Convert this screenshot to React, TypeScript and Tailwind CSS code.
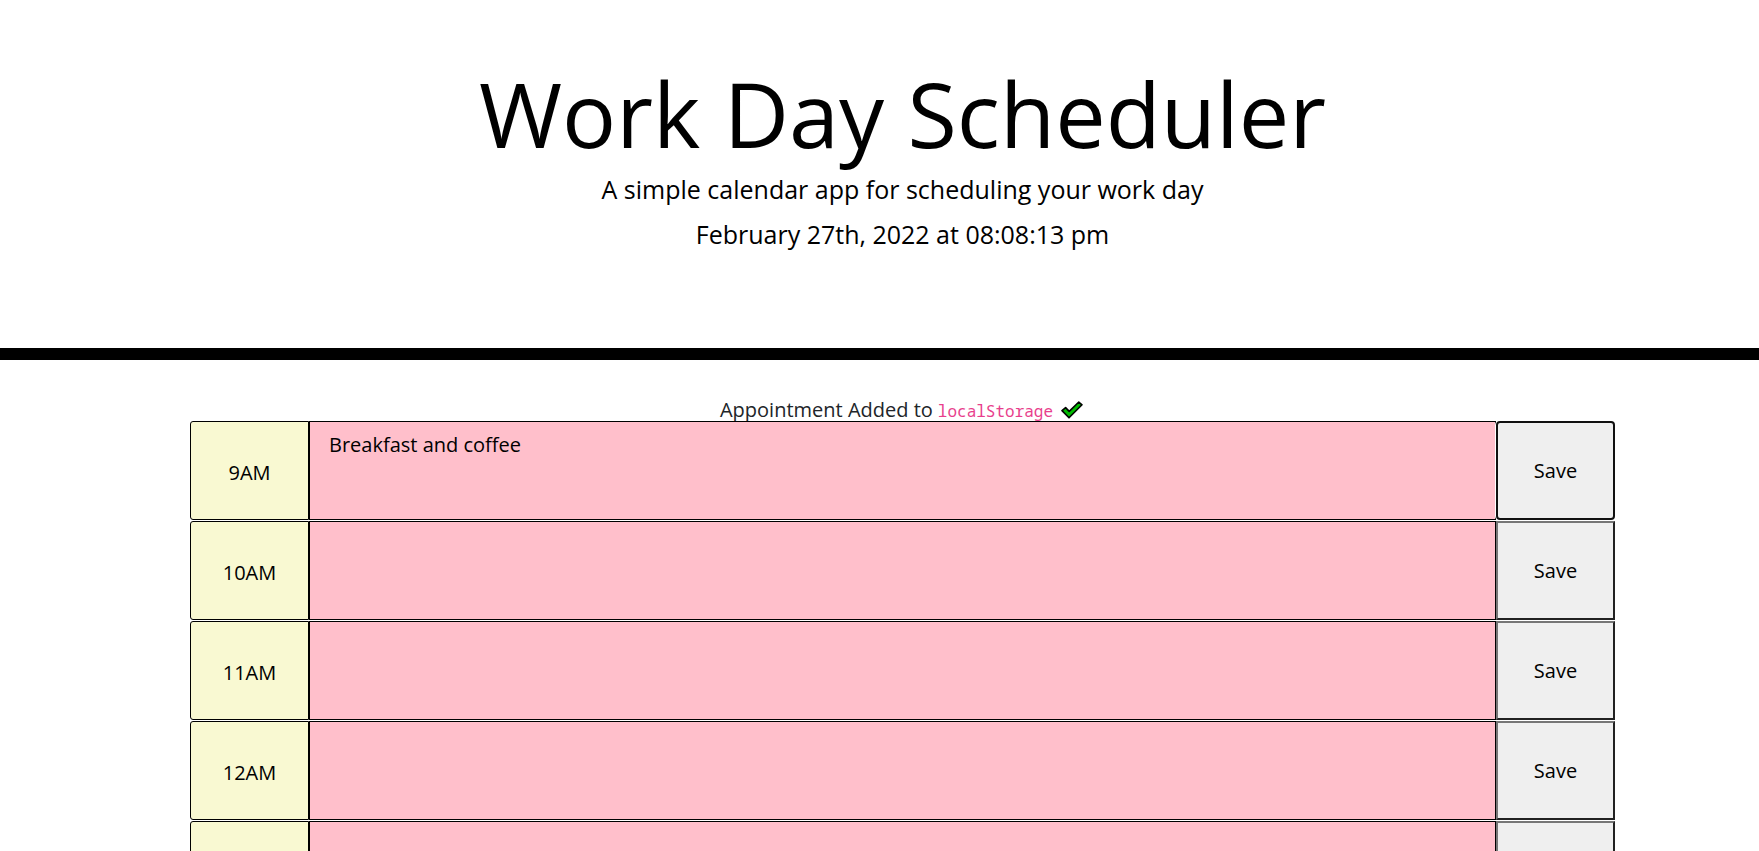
import { useState } from "react";

const hours = ["9AM", "10AM", "11AM", "12AM", "1PM", "2PM", "3PM", "4PM", "5PM"];

function CheckMark() {
  return (
    <svg width="22" height="18" viewBox="0 0 22 18" aria-hidden="true">
      <path
        d="M1 9.6 L4.6 6.6 L8.2 10.4 L17.8 1 L21 3.8 L8 16.8 Z"
        fill="#00bb00"
        stroke="#000"
        strokeWidth="1.6"
        strokeLinejoin="round"
      />
    </svg>
  );
}

function HourRow({ hour, initial, active }: { hour: string; initial: string; active: boolean }) {
  const [text, setText] = useState(initial);
  const id = `task-${hour}`;
  return (
    <div className="flex h-[99px]">
      <label
        htmlFor={id}
        className="flex w-[119px] shrink-0 items-center justify-center rounded-l-[3px] border border-black bg-[#f9f9d2] pt-1"
      >
        {hour}
      </label>
      <textarea
        id={id}
        value={text}
        onChange={(e) => setText(e.target.value)}
        className="min-w-0 grow resize-none border border-black bg-[#ffbfcb] px-[19px] py-2 outline-none"
      />
      <button
        type="button"
        className={
          active
            ? "w-[119px] shrink-0 rounded-[4px] border-2 border-[#101010] bg-[#efefef] ring-1 ring-white"
            : "w-[119px] shrink-0 border-2 border-t-[#767676] border-r-[#212121] border-b-[#212121] border-l-[#767676] bg-[#efefef]"
        }
      >
        Save
      </button>
    </div>
  );
}

export default function App() {
  return (
    <div className="min-h-screen bg-white font-['Open_Sans',sans-serif] text-[20px] leading-[30px] text-black">
      <header className="border-b-12 border-black pt-[59px] pb-[94px] pl-[46px] text-center">
        <h1 className="text-[90px] leading-[108px]">Work Day Scheduler</h1>
        <p className="mt-[2px] text-[25px] leading-[40px]">A simple calendar app for scheduling your work day</p>
        <p className="mt-[5px] text-[25px] leading-[40px]">February 27th, 2022 at 08:08:13 pm</p>
      </header>
      <main className="pt-[38px] pl-[46px]">
        <p className="flex h-[23px] items-baseline justify-center pr-[2px] leading-[24px] text-[#212529]">
          Appointment Added to
          <code className="ml-[5px] font-['Noto_Sans_Mono','DejaVu_Sans_Mono',monospace] text-[16px] text-[#e83e8c]">localStorage</code>
          <span className="ml-2 flex self-end pb-[2px]">
            <CheckMark />
          </span>
        </p>
        <div className="mx-auto flex max-w-[1425px] flex-col gap-px">
          {hours.map((hour, i) => (
            <HourRow key={hour} hour={hour} initial={i === 0 ? "Breakfast and coffee" : ""} active={i === 0} />
          ))}
        </div>
      </main>
    </div>
  );
}
